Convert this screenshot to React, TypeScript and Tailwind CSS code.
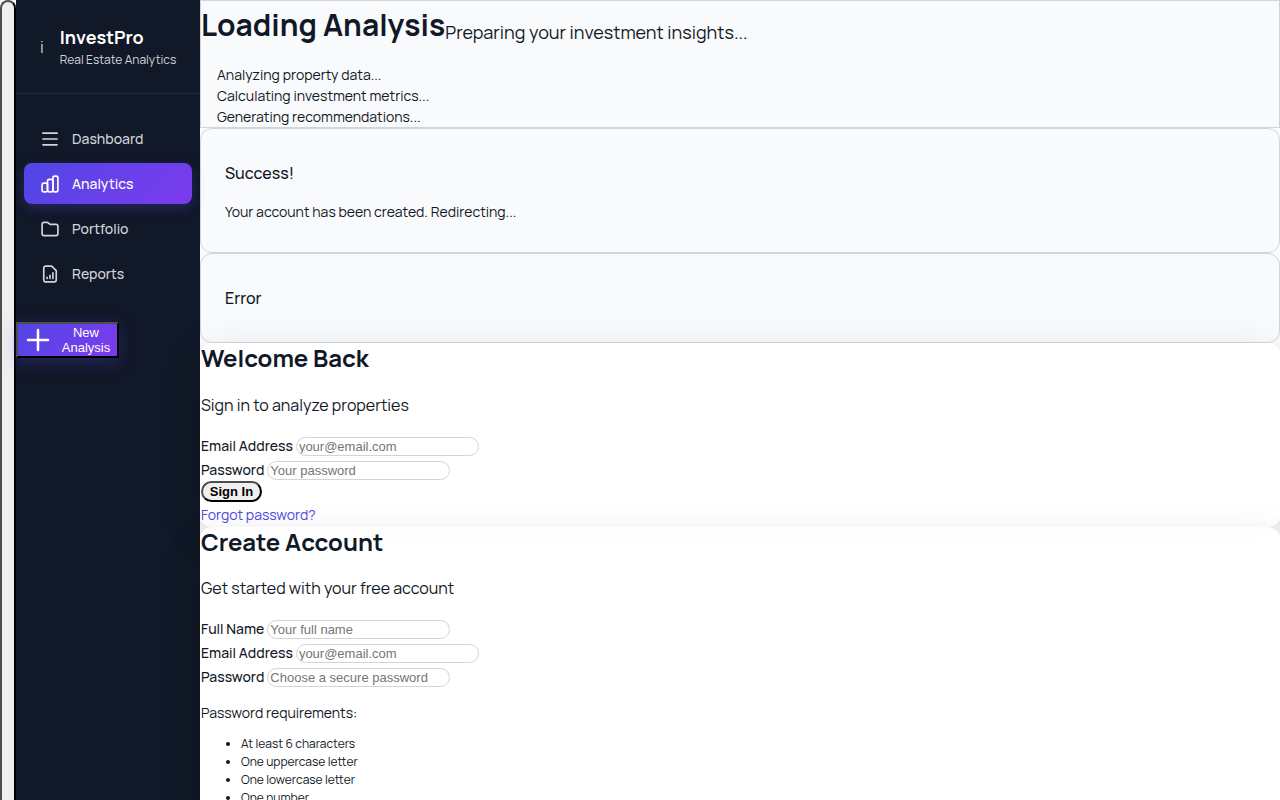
import React from "react";

const manrope = "font-['Manrope','Inter',sans-serif]";

function Icon({ children }: { children: React.ReactNode }) {
  return (
    <svg viewBox="0 0 24 24" className="size-5 shrink-0" fill="none" stroke="currentColor" strokeWidth="2" strokeLinecap="round" strokeLinejoin="round" aria-hidden="true">
      {children}
    </svg>
  );
}

const navItems = [
  { label: "Dashboard", icon: <path d="M3.500 5h17M3.500 12h17M3.500 19h17" /> },
  {
    label: "Analytics",
    active: true,
    icon: (
      <>
        <rect x="2.500" y="11" width="6.500" height="10.500" rx="2.200" />
        <rect x="9" y="6.500" width="6.500" height="15" rx="2.200" />
        <rect x="15.500" y="2.500" width="6" height="19" rx="2.200" />
      </>
    ),
  },
  { label: "Portfolio", icon: <path d="M2.500 17.500v-11A2.500 2.500 0 0 1 5 4h4.200l2.800 2.500h7A2.500 2.500 0 0 1 21.500 9v8.500A2.500 2.500 0 0 1 19 20H5a2.500 2.500 0 0 1-2.500-2.500z" /> },
  {
    label: "Reports",
    icon: (
      <>
        <path d="M14 2.500H7A2.500 2.500 0 0 0 4.500 5v14A2.500 2.500 0 0 0 7 21.500h10a2.500 2.500 0 0 0 2.500-2.500V8z" />
        <path d="M8.500 17.500v-1.500M12 17.500v-4M15.500 17.500v-7" />
      </>
    ),
  },
];

function Field({ id, label, type, placeholder }: { id: string; label: string; type: string; placeholder: string }) {
  return (
    <div className="flex h-6 items-center gap-[3px] text-sm">
      <label htmlFor={id} className="font-medium">{label}</label>
      <input
        id={id}
        type={type}
        placeholder={placeholder}
        className="h-[19px] w-[183px] rounded-xl border border-[#d1d5db] bg-white px-0.5 font-['Liberation_Sans',Arial,sans-serif] text-[13px] leading-4 placeholder:text-[#757575]"
      />
    </div>
  );
}

const card = "rounded-xl bg-white/95 px-px shadow-[0_12px_40px_rgba(0,0,0,0.12)]";

export default function App() {
  return (
    <div className={`flex min-h-screen bg-[#f9fafb] text-[#111827] ${manrope}`}>
      <button
        type="button"
        aria-label="Toggle menu"
        className="w-4 shrink-0 rounded-t-lg border-2 border-t-[#4d4d4d] border-r-black border-b-black border-l-[#4d4d4d] bg-[#efefef]"
      />
      <aside className="flex w-46 shrink-0 flex-col bg-[#111827] text-[#d1d5db]">
        <div className="flex h-[94px] items-center gap-4 border-b border-[#1f2937] px-6">
          <span className="text-base">i</span>
          <div className="pt-px">
            <div className="text-lg leading-6 font-bold text-white">InvestPro</div>
            <div className="text-xs leading-[21px] whitespace-nowrap">Real Estate Analytics</div>
          </div>
        </div>
        <nav className="flex flex-col gap-1 px-2 pt-6 pb-7">
          {navItems.map((item) => (
            <a
              key={item.label}
              href="#"
              className={
                item.active
                  ? "flex h-[41px] items-center gap-3 rounded-lg bg-linear-135 from-[#4f46e5] to-[#7c3aed] px-4 text-sm font-medium text-white shadow-[0_4px_12px_rgba(79,70,229,0.3)]"
                  : "flex h-[41px] items-center gap-3 rounded-lg px-4 text-sm font-medium"
              }
            >
              <Icon>{item.icon}</Icon>
              {item.label}
            </a>
          ))}
        </nav>
        <button
          type="button"
          className="flex h-9 w-[103px] items-center border-2 border-t-[#4d4d4d] border-r-black border-b-black border-l-[#4d4d4d] bg-linear-135 from-[#4f46e5] to-[#7c3aed] font-['Liberation_Sans',Arial,sans-serif] text-[13px] leading-[15px] text-white shadow-[0_4px_16px_rgba(79,70,229,0.3)]"
        >
          <svg viewBox="0 0 24 24" className="ml-[5px] size-[30px] shrink-0" fill="none" stroke="currentColor" strokeWidth="2" strokeLinecap="round" aria-hidden="true">
            <path d="M12 4v16M4 12h16" />
          </svg>
          <span className="grow pl-0.5 text-center">New Analysis</span>
        </button>
      </aside>

      <main className="min-w-0 grow">
        <section className="h-32 border border-[#d1d5db]">
          <div className="flex items-end">
            <h1 className="text-[30px] leading-[48px] font-bold">Loading Analysis</h1>
            <p className="text-lg leading-[34px]">Preparing your investment insights...</p>
          </div>
          <ul className="px-4 pt-[15px] text-sm leading-[21px]">
            <li>Analyzing property data...</li>
            <li>Calculating investment metrics...</li>
            <li>Generating recommendations...</li>
          </ul>
        </section>
        <section className="h-[125px] rounded-xl border border-[#d1d5db] px-6 pt-8">
          <h3 className="text-base leading-6 font-medium">Success!</h3>
          <p className="mt-4 text-sm leading-[21px]">Your account has been created. Redirecting...</p>
        </section>
        <section className="h-[90px] rounded-xl border border-[#d1d5db] px-6 pt-8">
          <h3 className="text-base leading-6 font-medium">Error</h3>
        </section>

        <section className={`h-46 ${card}`}>
          <h2 className="text-2xl leading-[30px] font-bold">Welcome Back</h2>
          <p className="mt-5 mb-[17px] text-base leading-6">Sign in to analyze properties</p>
          <form>
            <Field id="login-email" label="Email Address" type="email" placeholder="your@email.com" />
            <Field id="login-password" label="Password" type="password" placeholder="Your password" />
            <button type="button" className="-mt-px block h-[21px] w-[61px] rounded-xl border-2 border-t-[#4d4d4d] border-r-black border-b-black border-l-[#4d4d4d] bg-[#efefef] font-['Liberation_Sans',Arial,sans-serif] text-[13px] leading-4 font-bold text-black">
              Sign In
            </button>
          </form>
          <a href="#" className="mt-0.5 block text-sm leading-[21px] text-[#4f46e5]">Forgot password?</a>
        </section>

        <section className={`pb-10 ${card}`}>
          <h2 className="text-2xl leading-[30px] font-bold">Create Account</h2>
          <p className="mt-[19px] mb-[17px] text-base leading-6">Get started with your free account</p>
          <form>
            <Field id="signup-name" label="Full Name" type="text" placeholder="Your full name" />
            <Field id="signup-email" label="Email Address" type="email" placeholder="your@email.com" />
            <Field id="signup-password" label="Password" type="password" placeholder="Choose a secure password" />
          </form>
          <p className="mt-[13px] text-sm leading-[21px]">Password requirements:</p>
          <ul className="mt-3 list-disc pl-10 text-xs leading-[18px]">
            <li>At least 6 characters</li>
            <li>One uppercase letter</li>
            <li>One lowercase letter</li>
            <li>One number</li>
          </ul>
        </section>
      </main>
    </div>
  );
}
